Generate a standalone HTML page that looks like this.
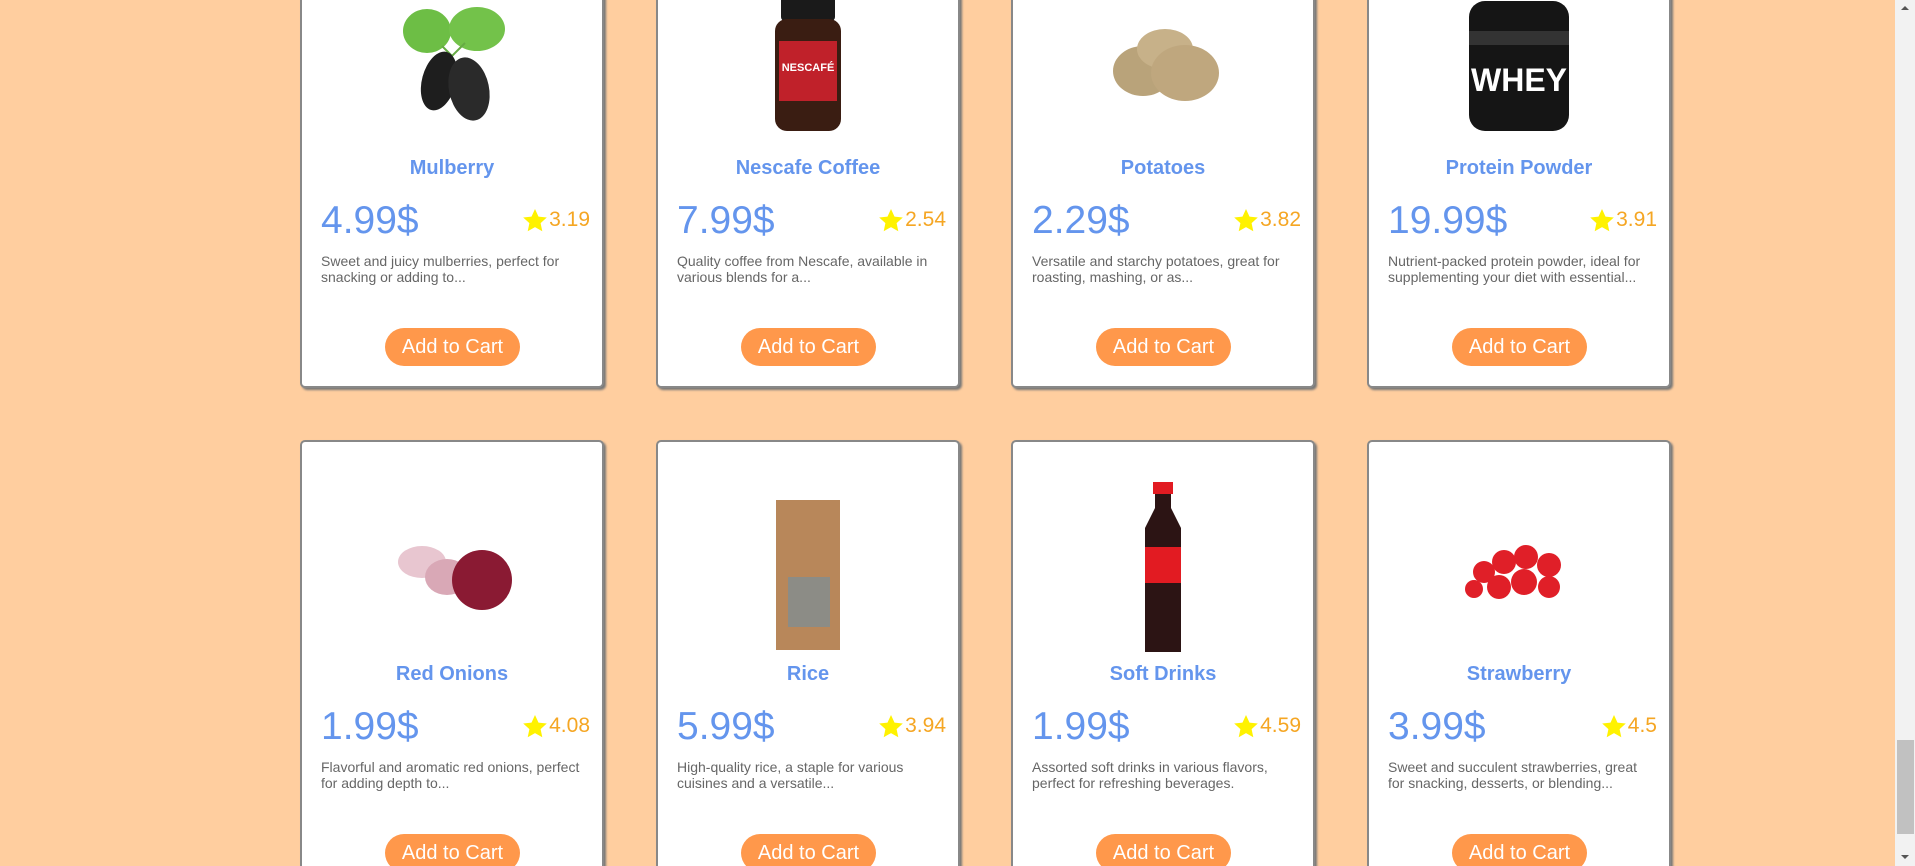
<!DOCTYPE html>
<html><head><meta charset="utf-8"><style>
*{margin:0;padding:0;box-sizing:border-box}
html,body{width:1915px;height:866px;overflow:hidden;background:#FFCE9F;font-family:"Liberation Sans",Arial,sans-serif}
#wrap{position:relative;width:1915px;height:866px;overflow:hidden}
.card{position:absolute;width:304px;height:454px;background:#fff;border:2px solid #888;border-radius:5px;box-shadow:2px 2px 2px #777}
.img{position:absolute;left:0;right:0;top:40px;height:180px;display:flex;justify-content:center;align-items:center}
.title{position:absolute;left:0;right:0;top:221px;text-align:center;color:#6495ED;font-weight:bold;font-size:20px}
.price{position:absolute;left:19px;top:263px;color:#6495ED;font-size:39px}
.rate{position:absolute;right:12px;top:272px;color:#F5A623;font-size:21px;display:flex;align-items:center}
.rate svg{margin-right:2px}
.desc{position:absolute;left:19px;right:20px;top:317px;color:#666;font-size:14px;line-height:16px}
.btn{position:absolute;left:83px;top:392px;width:135px;height:38px;border-radius:19px;background:#FF984B;color:#fff;font-size:20px;text-align:center;line-height:38px}
.sb{position:absolute;left:1895px;top:0;width:20px;height:866px;background:#F2F2F2}
.th{position:absolute;left:2px;top:740px;width:17px;height:94px;background:#C1C1C1}
</style></head><body><div id="wrap">

<div class="card" style="left:300px;top:-66px">
<div class="img"><svg width="130" height="130" viewBox="0 0 130 130"><ellipse cx="40" cy="30" rx="24" ry="22" fill="#6DBE45"/><ellipse cx="90" cy="28" rx="28" ry="22" fill="#73C24A"/><path d="M55 45 L65 55 L78 42" stroke="#6a4" stroke-width="2" fill="none"/><ellipse cx="52" cy="80" rx="17" ry="30" fill="#1e1e1e" transform="rotate(15 52 80)"/><ellipse cx="82" cy="88" rx="20" ry="32" fill="#2a2a2a" transform="rotate(-12 82 88)"/></svg></div>
<div class="title">Mulberry</div><div class="price">4.99$</div>
<div class="rate"><svg width="24" height="23" viewBox="0 0 24 23"><path d="M12 0l3.5 7.6 8.3.9-6.2 5.6 1.7 8.2L12 18.1 4.7 22.3l1.7-8.2L.2 8.5l8.3-.9z" fill="#FFF200"/></svg>3.19</div>
<div class="desc">Sweet and juicy mulberries, perfect for snacking or adding to...</div>
<div class="btn">Add to Cart</div></div>

<div class="card" style="left:656px;top:-66px">
<div class="img"><svg width="130" height="150" viewBox="0 0 130 150"><rect x="38" y="0" width="54" height="30" rx="4" fill="#1a1a1a"/><rect x="32" y="28" width="66" height="112" rx="12" fill="#3a1d12"/><rect x="36" y="50" width="58" height="60" fill="#c0212a"/><text x="65" y="80" font-size="11" fill="#fff" text-anchor="middle" font-weight="bold" font-family="Liberation Sans">NESCAFÉ</text></svg></div>
<div class="title">Nescafe Coffee</div><div class="price">7.99$</div>
<div class="rate"><svg width="24" height="23" viewBox="0 0 24 23"><path d="M12 0l3.5 7.6 8.3.9-6.2 5.6 1.7 8.2L12 18.1 4.7 22.3l1.7-8.2L.2 8.5l8.3-.9z" fill="#FFF200"/></svg>2.54</div>
<div class="desc">Quality coffee from Nescafe, available in various blends for a...</div>
<div class="btn">Add to Cart</div></div>

<div class="card" style="left:1011px;top:-66px">
<div class="img"><svg width="140" height="110" viewBox="0 0 140 110"><ellipse cx="50" cy="60" rx="30" ry="25" fill="#b9a37a"/><ellipse cx="72" cy="38" rx="28" ry="20" fill="#c7b189"/><ellipse cx="92" cy="62" rx="34" ry="28" fill="#bfa77e"/></svg></div>
<div class="title">Potatoes</div><div class="price">2.29$</div>
<div class="rate"><svg width="24" height="23" viewBox="0 0 24 23"><path d="M12 0l3.5 7.6 8.3.9-6.2 5.6 1.7 8.2L12 18.1 4.7 22.3l1.7-8.2L.2 8.5l8.3-.9z" fill="#FFF200"/></svg>3.82</div>
<div class="desc">Versatile and starchy potatoes, great for roasting, mashing, or as...</div>
<div class="btn">Add to Cart</div></div>

<div class="card" style="left:1367px;top:-66px">
<div class="img"><svg width="150" height="150" viewBox="0 0 150 150"><rect x="25" y="10" width="100" height="130" rx="16" fill="#151515"/><rect x="25" y="40" width="100" height="14" fill="#333"/><text x="75" y="100" font-size="32" fill="#fff" text-anchor="middle" font-weight="bold" font-family="Liberation Sans">WHEY</text></svg></div>
<div class="title">Protein Powder</div><div class="price">19.99$</div>
<div class="rate"><svg width="24" height="23" viewBox="0 0 24 23"><path d="M12 0l3.5 7.6 8.3.9-6.2 5.6 1.7 8.2L12 18.1 4.7 22.3l1.7-8.2L.2 8.5l8.3-.9z" fill="#FFF200"/></svg>3.91</div>
<div class="desc">Nutrient-packed protein powder, ideal for supplementing your diet with essential...</div>
<div class="btn">Add to Cart</div></div>

<div class="card" style="left:300px;top:440px">
<div class="img"><svg width="140" height="100" viewBox="0 0 140 100"><ellipse cx="40" cy="40" rx="24" ry="16" fill="#e8c6d0"/><ellipse cx="65" cy="55" rx="22" ry="18" fill="#d9a8b6"/><circle cx="100" cy="58" r="30" fill="#8a1a33"/></svg></div>
<div class="title">Red Onions</div><div class="price">1.99$</div>
<div class="rate"><svg width="24" height="23" viewBox="0 0 24 23"><path d="M12 0l3.5 7.6 8.3.9-6.2 5.6 1.7 8.2L12 18.1 4.7 22.3l1.7-8.2L.2 8.5l8.3-.9z" fill="#FFF200"/></svg>4.08</div>
<div class="desc">Flavorful and aromatic red onions, perfect for adding depth to...</div>
<div class="btn">Add to Cart</div></div>

<div class="card" style="left:656px;top:440px">
<div class="img"><svg width="100" height="160" viewBox="0 0 100 160"><rect x="18" y="8" width="64" height="150" fill="#b8875a"/><rect x="30" y="85" width="42" height="50" fill="#8c8c86"/></svg></div>
<div class="title">Rice</div><div class="price">5.99$</div>
<div class="rate"><svg width="24" height="23" viewBox="0 0 24 23"><path d="M12 0l3.5 7.6 8.3.9-6.2 5.6 1.7 8.2L12 18.1 4.7 22.3l1.7-8.2L.2 8.5l8.3-.9z" fill="#FFF200"/></svg>3.94</div>
<div class="desc">High-quality rice, a staple for various cuisines and a versatile...</div>
<div class="btn">Add to Cart</div></div>

<div class="card" style="left:1011px;top:440px">
<div class="img"><svg width="60" height="180" viewBox="0 0 60 180"><rect x="20" y="0" width="20" height="12" fill="#e21b22"/><path d="M22 12h16v14l10 20v124H12V46l10-20z" fill="#2c1414"/><rect x="12" y="65" width="36" height="36" fill="#e21b22"/></svg></div>
<div class="title">Soft Drinks</div><div class="price">1.99$</div>
<div class="rate"><svg width="24" height="23" viewBox="0 0 24 23"><path d="M12 0l3.5 7.6 8.3.9-6.2 5.6 1.7 8.2L12 18.1 4.7 22.3l1.7-8.2L.2 8.5l8.3-.9z" fill="#FFF200"/></svg>4.59</div>
<div class="desc">Assorted soft drinks in various flavors, perfect for refreshing beverages.</div>
<div class="btn">Add to Cart</div></div>

<div class="card" style="left:1367px;top:440px">
<div class="img"><svg width="130" height="90" viewBox="0 0 130 90"><g fill="#e01f28"><circle cx="30" cy="45" r="11"/><circle cx="50" cy="35" r="12"/><circle cx="72" cy="30" r="12"/><circle cx="95" cy="38" r="12"/><circle cx="45" cy="60" r="12"/><circle cx="70" cy="55" r="13"/><circle cx="95" cy="60" r="11"/><circle cx="20" cy="62" r="9"/></g></svg></div>
<div class="title">Strawberry</div><div class="price">3.99$</div>
<div class="rate"><svg width="24" height="23" viewBox="0 0 24 23"><path d="M12 0l3.5 7.6 8.3.9-6.2 5.6 1.7 8.2L12 18.1 4.7 22.3l1.7-8.2L.2 8.5l8.3-.9z" fill="#FFF200"/></svg>4.5</div>
<div class="desc">Sweet and succulent strawberries, great for snacking, desserts, or blending...</div>
<div class="btn">Add to Cart</div></div>

<div class="sb"><div style="position:absolute;left:6px;top:6px;border:4px solid transparent;border-bottom:4px solid #555;border-top:0"></div><div class="th"></div><div style="position:absolute;left:6px;top:855px;border:4px solid transparent;border-top:4px solid #555;border-bottom:0"></div></div>
</div></body></html>
